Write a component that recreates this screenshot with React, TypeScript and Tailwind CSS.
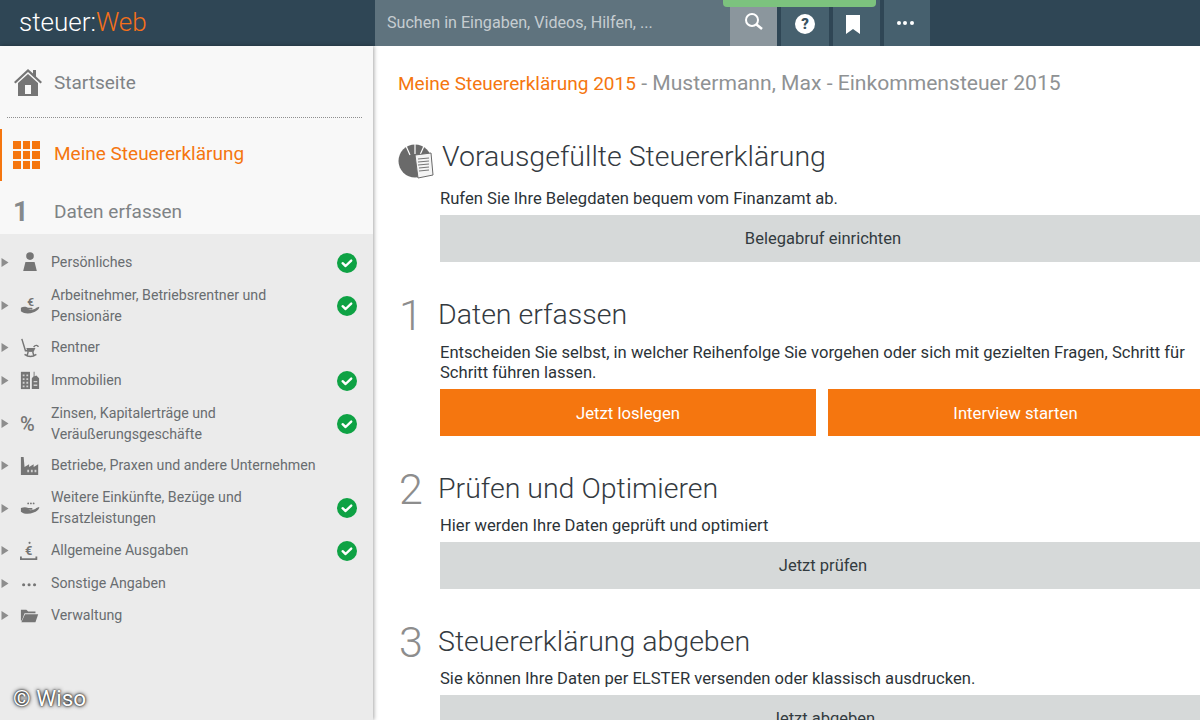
import React from "react";

const Caret = () => (
  <svg width="8" height="11" viewBox="0 0 8 11" className="shrink-0"><path d="M0.500 1l7 4.500-7 4.500z" fill="#8d8d8d" /></svg>
);

const Check = ({ low }: { low?: boolean }) => (
  <svg width="20" height="20" viewBox="0 0 20 20" className={low ? "shrink-0 mt-[2px]" : "shrink-0"}>
    <circle cx="10" cy="10" r="10" fill="#0ea244" />
    <path d="M5.6 10.2l3 2.8 5.6-5.4" fill="none" stroke="#fff" strokeWidth="2.4" strokeLinecap="round" strokeLinejoin="round" />
  </svg>
);

const g = "#757575";
const S = 20;
const icons: Record<string, React.ReactNode> = {
  person: (
    <svg width={S} height={S} viewBox="0 0 22 22"><circle cx="11" cy="4.500" r="4.200" fill={g} /><path d="M6 11h10l2.500 10h-15z" fill={g} /></svg>
  ),
  hand: (
    <svg width={S} height={S} viewBox="0 0 22 22"><path d="M1 14c3-2 6-1 8 0h4c1 0 1 2 0 2H9c3 1 7 0 9-2l3-1c1 1-2 5-6 6-5 2-10 2-14-1z" fill={g} /><text x="8" y="12" fontSize="13" fontWeight="700" fill={g} fontFamily="Roboto, sans-serif">€</text></svg>
  ),
  chair: (
    <svg width={S} height={S} viewBox="0 0 22 22"><path d="M2 1l4 13h9" fill="none" stroke={g} strokeWidth="1.6" /><path d="M7 11h10l-2 4H8z" fill={g} /><path d="M15 10c2-3 5-2 5 0" fill="none" stroke={g} strokeWidth="1.6" /><path d="M5 18c4 3 9 3 13 0M9 15l-1 4M14 15l1 4" fill="none" stroke={g} strokeWidth="1.6" /></svg>
  ),
  buildings: (
    <svg width={S} height={S} viewBox="0 0 22 22"><path d="M1 2h10v19H1z" fill={g} /><path d="M13 9l2-2V2h1v5l2-1 3 3v12h-8z" fill={g} /><path d="M3 5h2v2H3zM7 5h2v2H7zM3 9h2v2H3zM7 9h2v2H7zM3 13h2v2H3zM7 13h2v2H7zM3 17h2v2H3zM7 17h2v2H7zM15 12h4v1.500h-4zM15 16h4v1.500h-4z" fill="#d0d0d0" /></svg>
  ),
  factory: (
    <svg width={S} height={S} viewBox="0 0 22 22"><path d="M1 1h3l1 11 5-3v3l5-3v3l5-3v12H1z" fill={g} /><path d="M8 15h2v3H8zM12 15h2v3h-2zM16 15h2v3h-2z" fill="#d0d0d0" /></svg>
  ),
  dotsHand: (
    <svg width={S} height={S} viewBox="0 0 22 22"><path d="M1 11c3-1 6-1 8 0h4c1 0 1 2 0 2H9c3 1 7 0 9-2l3-1c1 1-2 5-6 6-5 2-10 2-14-1z" fill={g} /><circle cx="9" cy="6" r="1" fill={g} /><circle cx="12" cy="6" r="1" fill={g} /><circle cx="15" cy="6" r="1" fill={g} /></svg>
  ),
  euroBox: (
    <svg width={S} height={S} viewBox="0 0 22 22"><circle cx="10.500" cy="2" r="1.200" fill={g} /><text x="5.500" y="15.500" fontSize="14" fontWeight="700" fill={g} fontFamily="Roboto, sans-serif">€</text><path d="M1 17v3h17v-3" fill="none" stroke={g} strokeWidth="2" /></svg>
  ),
  dots: (
    <svg width={S} height={S} viewBox="0 0 22 22"><circle cx="4" cy="13" r="1.700" fill={g} /><circle cx="10" cy="13" r="1.700" fill={g} /><circle cx="16" cy="13" r="1.700" fill={g} /></svg>
  ),
  folder: (
    <svg width={S} height={S} viewBox="0 0 22 22"><path d="M1 4h6l2 2h8v2H5L2 16H1z" fill={g} /><path d="M5.500 9H20l-3 9H1.500z" fill={g} /></svg>
  ),
};

const rows = [
  { icon: "person", label: ["Persönliches"], h: "h-[32px]", done: true, low: true },
  { icon: "hand", label: ["Arbeitnehmer, Betriebsrentner und", "Pensionäre"], h: "h-[54px]", done: true, low: true, pt: "pt-[2px]" },
  { icon: "chair", label: ["Rentner"], h: "h-[31px]", done: false },
  { icon: "buildings", label: ["Immobilien"], h: "h-[34px]", done: true, low: true },
  { text: "%", label: ["Zinsen, Kapitalerträge und", "Veräußerungsgeschäfte"], h: "h-[53px]", done: true },
  { icon: "factory", label: ["Betriebe, Praxen und andere Unternehmen"], h: "h-[31px]", done: false },
  { icon: "dotsHand", label: ["Weitere Einkünfte, Bezüge und", "Ersatzleistungen"], h: "h-[54px]", done: true },
  { icon: "euroBox", label: ["Allgemeine Ausgaben"], h: "h-[31px]", done: true },
  { icon: "dots", label: ["Sonstige Angaben"], h: "h-[34px]", done: false },
  { icon: "folder", label: ["Verwaltung"], h: "h-[31px]", done: false },
];

const GreyBtn = ({ children }: { children: React.ReactNode }) => (
  <div className="h-[47px] w-[766px] pt-[2px] bg-[#d6d9d9] flex items-center justify-center text-[16.500px] text-[#333b40] shrink-0">{children}</div>
);

const Step = ({ n, title }: { n: string; title: string }) => (
  <div className="flex items-center h-[43px]">
    <span className="w-[40px] pl-[1px] text-[43px] font-light text-[#8d8d8d] leading-none">{n}</span>
    <span className="text-[28.500px] font-light text-[#343a3f] leading-none">{title}</span>
  </div>
);

export default function App() {
  return (
    <div className="relative w-[1200px] h-[720px] overflow-hidden bg-white flex flex-col font-['Roboto',sans-serif]">
      <header className="h-[46px] shrink-0 bg-[#2f4655] flex">
        <div className="w-[375px] pl-[19px] flex items-center text-[26px] font-light leading-none pb-[3px] text-white">
          steuer:<span className="text-[#f5701a]">Web</span>
        </div>
        <div className="w-[355px] bg-[#5f737e] flex items-center pl-[12px] text-[16.100px] text-[#c6cdd1]">Suchen in Eingaben, Videos, Hilfen, ...</div>
        <div className="w-[47px] bg-[#8b969d] flex items-center justify-center pb-[3px]">
          <svg width="22" height="22" viewBox="0 0 22 22"><circle cx="9" cy="9" r="6" fill="none" stroke="#fff" strokeWidth="2" /><path d="M13.500 13.500l5.500 4.500" stroke="#fff" strokeWidth="2.500" /></svg>
        </div>
        <div className="w-[4px]" />
        <div className="w-[48px] bg-[#46606e] flex items-center justify-center pt-[2px]">
          <div className="w-[20px] h-[20px] rounded-full bg-white flex items-center justify-center text-[15px] font-black text-[#3a5260] leading-none">?</div>
        </div>
        <div className="w-[4px]" />
        <div className="w-[47px] bg-[#46606e] flex items-center justify-center pr-[8px] pt-[3px]">
          <svg width="14" height="20" viewBox="0 0 14 20"><path d="M0 0h14v19l-7-5-7 5z" fill="#fff" /></svg>
        </div>
        <div className="w-[4px]" />
        <div className="w-[46px] bg-[#46606e] flex items-center justify-center gap-[2.500px] pb-[1px] pr-[4px]">
          <i className="w-[4px] h-[4px] rounded-full bg-white" />
          <i className="w-[4px] h-[4px] rounded-full bg-white" />
          <i className="w-[4px] h-[4px] rounded-full bg-white" />
        </div>
      </header>
      <div className="absolute left-[723px] top-0 w-[153px] h-[7px] bg-[#7cc27e] rounded-b-[4px]" />

      <div className="flex flex-1 min-h-0">
        <aside className="w-[373px] shrink-0 bg-[#ebebeb] shadow-[1px_0_4px_rgba(0,0,0,0.35)] flex flex-col z-10">
          <div className="bg-[#f8f8f8] h-[188px] flex flex-col shrink-0">
            <div className="h-[72px] ml-[7px] mr-[11px] border-b border-dotted border-[#8f8f8f] flex items-center">
              <svg width="30" height="30" viewBox="0 0 30 30" className="ml-[6px] shrink-0">
                <path d="M1 15L15 2l5 4.500V3h3v6.500l6 5.500-1.500 1.500L15 5 2.500 16.500z" fill="#757575" />
                <path fillRule="evenodd" d="M5 16L15 7l10 9v13H5zM12 18v9h6v-9z" fill="#757575" />
              </svg>
              <span className="ml-[11px] pt-[3px] text-[19px] text-[#7f8386]">Startseite</span>
            </div>
            <div className="mt-[11px] h-[52px] border-l-[2px] border-[#f5760f] flex items-center pl-[11px]">
              <div className="grid grid-cols-3 gap-[2px] w-[27px]">
                {Array.from({ length: 9 }).map((_, i) => (
                  <i key={i} className="h-[7.700px] bg-[#f5760f]" />
                ))}
              </div>
              <span className="ml-[14px] pb-[2px] text-[19px] text-[#f5760f]">Meine Steuererklärung</span>
            </div>
            <div className="flex-1 flex items-center pl-[13px] pt-[9px]">
              <span className="w-[41px] text-[27px] font-bold text-[#85898c] leading-none">1</span>
              <span className="text-[19px] text-[#7f8386]">Daten erfassen</span>
            </div>
          </div>
          <ul className="pt-[12px] flex flex-col">
            {rows.map((r, i) => (
              <li key={i} className={`${r.h} flex items-center pl-[1px] pr-[16px]`}>
                <Caret />
                <span className="ml-[10px] pl-[1px] w-[32px] flex justify-start shrink-0 items-center text-[20px] font-medium text-[#757575]">
                  {r.text ? r.text : icons[r.icon as string]}
                </span>
                <span className={`flex-1 text-[14.200px] leading-[21px] text-[#696d70] ${r.pt ?? ""}`}>
                  {r.label.map((l) => (
                    <span key={l} className="block">{l}</span>
                  ))}
                </span>
                {r.done && <Check low={r.low} />}
              </li>
            ))}
          </ul>
        </aside>

        <main className="flex-1 min-w-0 pl-[25px] pt-[24px] flex flex-col">
          <h1 className="text-[21.100px] leading-[26px] text-[#8f9294] whitespace-nowrap">
            <span className="text-[#f5760f] text-[19.050px]">Meine Steuererklärung 2015</span> - Mustermann, Max - Einkommensteuer 2015
          </h1>
          <div className="mt-[42px] flex items-center h-[36px]">
            <svg width="36" height="36" viewBox="0 0 36 36" className="shrink-0 mr-[8px] translate-y-[5px]">
              <circle cx="17" cy="17" r="16.500" fill="#6a6a6a" />
              <path d="M17 0v10M8 2l4 9M26 2l-4 9" stroke="#fff" strokeWidth="1.200" />
              <path d="M17 11l16-2 2 22-15 3z" fill="#f4f4f4" stroke="#6a6a6a" />
              <path d="M20 15l11-1M20 18l11-1M20 21l11-1M21 24l10-1M21 27l10-1" stroke="#777" strokeWidth="1.200" />
            </svg>
            <span className="text-[28.500px] font-light text-[#343a3f] leading-none">Vorausgefüllte Steuererklärung</span>
          </div>
          <div className="ml-[42px] whitespace-nowrap">
            <p className="mt-[13px] text-[16.600px] leading-[21px] text-[#2c3338]">Rufen Sie Ihre Belegdaten bequem vom Finanzamt ab.</p>
            <div className="mt-[6px]"><GreyBtn>Belegabruf einrichten</GreyBtn></div>
          </div>
          <div className="mt-[32px]"><Step n="1" title="Daten erfassen" /></div>
          <div className="ml-[42px]">
            <p className="mt-[6px] text-[16.600px] leading-[20px] text-[#2c3338] w-[760px]">Entscheiden Sie selbst, in welcher Reihenfolge Sie vorgehen oder sich mit gezielten Fragen, Schritt für Schritt führen lassen.</p>
            <div className="mt-[6px] flex gap-[12px] w-[766px]">
              <div className="h-[47px] w-[376px] pt-[2px] bg-[#f5760f] flex items-center justify-center text-[16.700px] text-white">Jetzt loslegen</div>
              <div className="h-[47px] w-[375px] pt-[2px] bg-[#f5760f] flex items-center justify-center text-[16.700px] text-white">Interview starten</div>
            </div>
          </div>
          <div className="mt-[32px]"><Step n="2" title="Prüfen und Optimieren" /></div>
          <div className="ml-[42px]">
            <p className="mt-[4px] text-[16.600px] leading-[21px] text-[#2c3338]">Hier werden Ihre Daten geprüft und optimiert</p>
            <div className="mt-[6px]"><GreyBtn>Jetzt prüfen</GreyBtn></div>
          </div>
          <div className="mt-[32px]"><Step n="3" title="Steuererklärung abgeben" /></div>
          <div className="ml-[42px]">
            <p className="mt-[4px] text-[16.600px] leading-[21px] text-[#2c3338]">Sie können Ihre Daten per ELSTER versenden oder klassisch ausdrucken.</p>
            <div className="mt-[6px]"><GreyBtn>Jetzt abgeben</GreyBtn></div>
          </div>
        </main>
      </div>
      <div className="absolute left-[13px] top-[684px] z-20 text-[22.500px] leading-[28px] text-white [text-shadow:0_0_4px_#000,0_0_2px_#000]">© Wiso</div>
    </div>
  );
}
